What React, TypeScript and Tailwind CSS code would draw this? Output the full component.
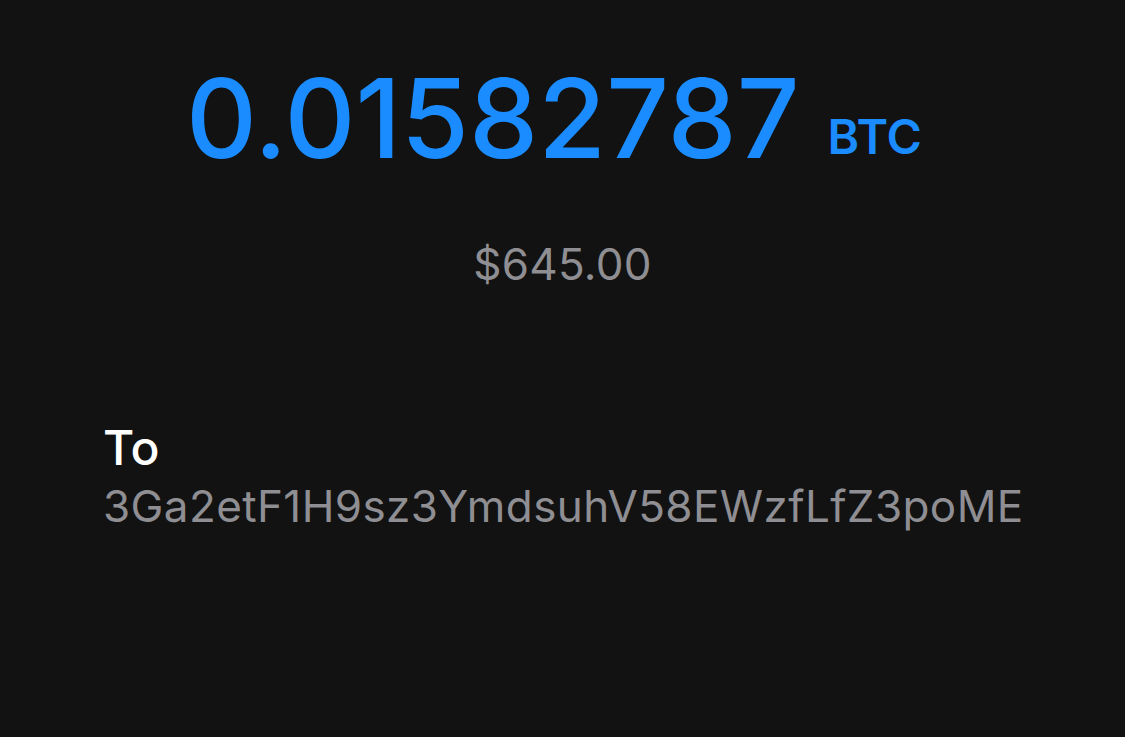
export default function App() {
  return (
    <div
      className="min-h-[737px] w-full bg-[#121212] px-[103px]"
      style={{ fontFamily: 'Inter, "Liberation Sans", sans-serif' }}
    >
      {/* Amount */}
      <div className="flex flex-col items-center pt-[52px]">
        <div className="mr-[17px] flex items-baseline gap-[28px] text-[#1a8cff]">
          <span className="text-[110px] font-medium leading-[1.2]">0.01582787</span>
          <span className="-translate-y-[4px] text-[48px] font-semibold">BTC</span>
        </div>
        <div className="mt-[58px] text-[44px] leading-none tracking-[0.3px] text-[#8e8e93]">$645.00</div>
      </div>

      {/* Recipient */}
      <div className="mt-[138px] flex flex-col">
        <span className="text-[48px] font-medium leading-none text-white">To</span>
        <span className="mt-[12px] text-[44px] leading-none tracking-[0.4px] text-[#8e8e93]">
          3Ga2etF1H9sz3YmdsuhV58EWzfLfZ3poME
        </span>
      </div>
    </div>
  )
}
